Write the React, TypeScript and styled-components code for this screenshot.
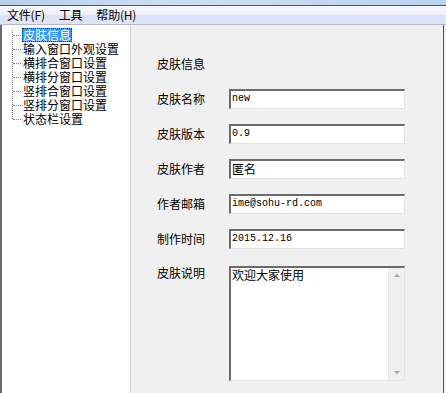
import React from "react";
import styled, { createGlobalStyle } from "styled-components";

const GlobalStyle = createGlobalStyle`
    html, body {
        margin: 0;
        padding: 0;
        overflow: hidden;
        background: #f0f0f0;
    }
    * {
        box-sizing: border-box;
    }
`;

const cjk = `"Noto Sans CJK SC", "Noto Sans", sans-serif`;
const mono = `"Liberation Mono", "Noto Sans CJK SC", monospace`;

const Window = styled.div`
    width: 446px;
    height: 393px;
    display: flex;
    flex-direction: column;
    font-family: ${cjk};
    font-size: 12px;
    color: #000;
    overflow: hidden;
`;

const TitleStrip = styled.div`
    height: 6px;
    background: linear-gradient(90deg, #b8cfe9, #cfdff2 40%, #bcd2ec);
    border-bottom: 1px solid #44566b;
`;

const MenuBar = styled.div`
    height: 19px;
    display: flex;
    align-items: center;
    padding-left: 7px;
    gap: 14px;
    background: linear-gradient(180deg, #f8f9fc 0%, #eef1f9 45%, #dce2f3 55%, #dfe5f5 100%);
    border-bottom: 1px solid #b6bac6;
`;

const MenuItem = styled.span`
    line-height: 18px;
    letter-spacing: -0.2px;
`;

const Main = styled.div`
    flex: 1;
    display: flex;
    min-height: 0;
`;

const TreePane = styled.div`
    width: 131px;
    background: #fff;
    border-left: 2px solid #6a6a6a;
    border-right: 1px solid #d6d6d6;
    padding: 3px 0 0 10px;
`;

const TreeList = styled.ul`
    list-style: none;
    margin: 0;
    padding: 0 0 0 0;
    position: relative;
    &::before {
        content: "";
        position: absolute;
        left: 0;
        top: 2px;
        height: 89px;
        border-left: 1px dotted #808080;
    }
`;

const TreeItem = styled.li<{ $selected?: boolean }>`
    position: relative;
    height: 14px;
    line-height: 14px;
    padding-left: 10px;
    white-space: nowrap;
    &::before {
        content: "";
        position: absolute;
        left: 1px;
        top: 7px;
        width: 8px;
        border-top: 1px dotted #808080;
    }
`;

const ItemLabel = styled.span<{ $selected?: boolean }>`
    display: inline-block;
    height: 14px;
    padding: 0 1px;
    background: ${(p) => (p.$selected ? "#3399ff" : "transparent")};
    color: ${(p) => (p.$selected ? "#fff" : "#000")};
    outline: ${(p) => (p.$selected ? "1px dotted #1a3d6e" : "none")};
    outline-offset: -1px;
`;

const FormPane = styled.div`
    flex: 1;
    background: #f0f0f0;
    padding: 29px 0 0 26px;
    border-right: 1px solid #4e4e4e;
`;

const RightEdge = styled.div`
    width: 2px;
    background: #f4f4f4;
`;

const FormGrid = styled.div`
    display: grid;
    grid-template-columns: 72px 176px;
    row-gap: 15px;
    align-items: center;
`;

const Label = styled.div<{ $top?: boolean }>`
    height: 20px;
    line-height: 20px;
    align-self: ${(p) => (p.$top ? "start" : "center")};
    margin-top: ${(p) => (p.$top ? "-1px" : "0")};
`;

const Field = styled.div<{ $cjk?: boolean }>`
    height: 20px;
    background: #fff;
    border-top: 2px solid #6b6b6b;
    border-left: 2px solid #6b6b6b;
    border-right: 1px solid #e3e3e3;
    border-bottom: 1px solid #e3e3e3;
    padding-left: 1px;
    line-height: 16px;
    font-family: ${(p) => (p.$cjk ? cjk : mono)};
    font-size: ${(p) => (p.$cjk ? "12px" : "10px")};
    white-space: nowrap;
    overflow: hidden;
`;

const MemoBox = styled.div`
    height: 115px;
    margin-top: 2px;
    background: #fff;
    border-top: 2px solid #6b6b6b;
    border-left: 2px solid #6b6b6b;
    border-right: 1px solid #e3e3e3;
    border-bottom: 1px solid #e3e3e3;
    display: flex;
`;

const MemoText = styled.div`
    flex: 1;
    padding-left: 1px;
    line-height: 14px;
`;

const ScrollBar = styled.div`
    width: 16px;
    background: #f0f0f0;
    border-left: 1px solid #e8e8e8;
    display: flex;
    flex-direction: column;
    justify-content: space-between;
    align-items: center;
    padding: 6px 0 6px;
`;

const Arrow = styled.div<{ $down?: boolean }>`
    width: 0;
    height: 0;
    border-left: 3px solid transparent;
    border-right: 3px solid transparent;
    ${(p) =>
        p.$down
            ? "border-top: 3px solid #a0a0a0;"
            : "border-bottom: 3px solid #a0a0a0;"}
`;

const treeItems = [
    "皮肤信息",
    "输入窗口外观设置",
    "横排合窗口设置",
    "横排分窗口设置",
    "竖排合窗口设置",
    "竖排分窗口设置",
    "状态栏设置",
];

const fields: { label: string; value: string; cjk?: boolean }[] = [
    { label: "皮肤名称", value: "new" },
    { label: "皮肤版本", value: "0.9" },
    { label: "皮肤作者", value: "匿名", cjk: true },
    { label: "作者邮箱", value: "ime@sohu-rd.com" },
    { label: "制作时间", value: "2015.12.16" },
];

export default function App() {
    return (
        <Window>
            <GlobalStyle />
            <TitleStrip />
            <MenuBar>
                <MenuItem>文件(F)</MenuItem>
                <MenuItem>工具</MenuItem>
                <MenuItem>帮助(H)</MenuItem>
            </MenuBar>
            <Main>
                <TreePane>
                    <TreeList>
                        {treeItems.map((item, i) => (
                            <TreeItem key={item}>
                                <ItemLabel $selected={i === 0}>{item}</ItemLabel>
                            </TreeItem>
                        ))}
                    </TreeList>
                </TreePane>
                <FormPane>
                    <FormGrid>
                        <Label>皮肤信息</Label>
                        <div />
                        {fields.map((f) => (
                            <React.Fragment key={f.label}>
                                <Label>{f.label}</Label>
                                <Field $cjk={f.cjk}>{f.value}</Field>
                            </React.Fragment>
                        ))}
                        <Label $top>皮肤说明</Label>
                        <MemoBox>
                            <MemoText>欢迎大家使用</MemoText>
                            <ScrollBar>
                                <Arrow />
                                <Arrow $down />
                            </ScrollBar>
                        </MemoBox>
                    </FormGrid>
                </FormPane>
                <RightEdge />
            </Main>
        </Window>
    );
}
